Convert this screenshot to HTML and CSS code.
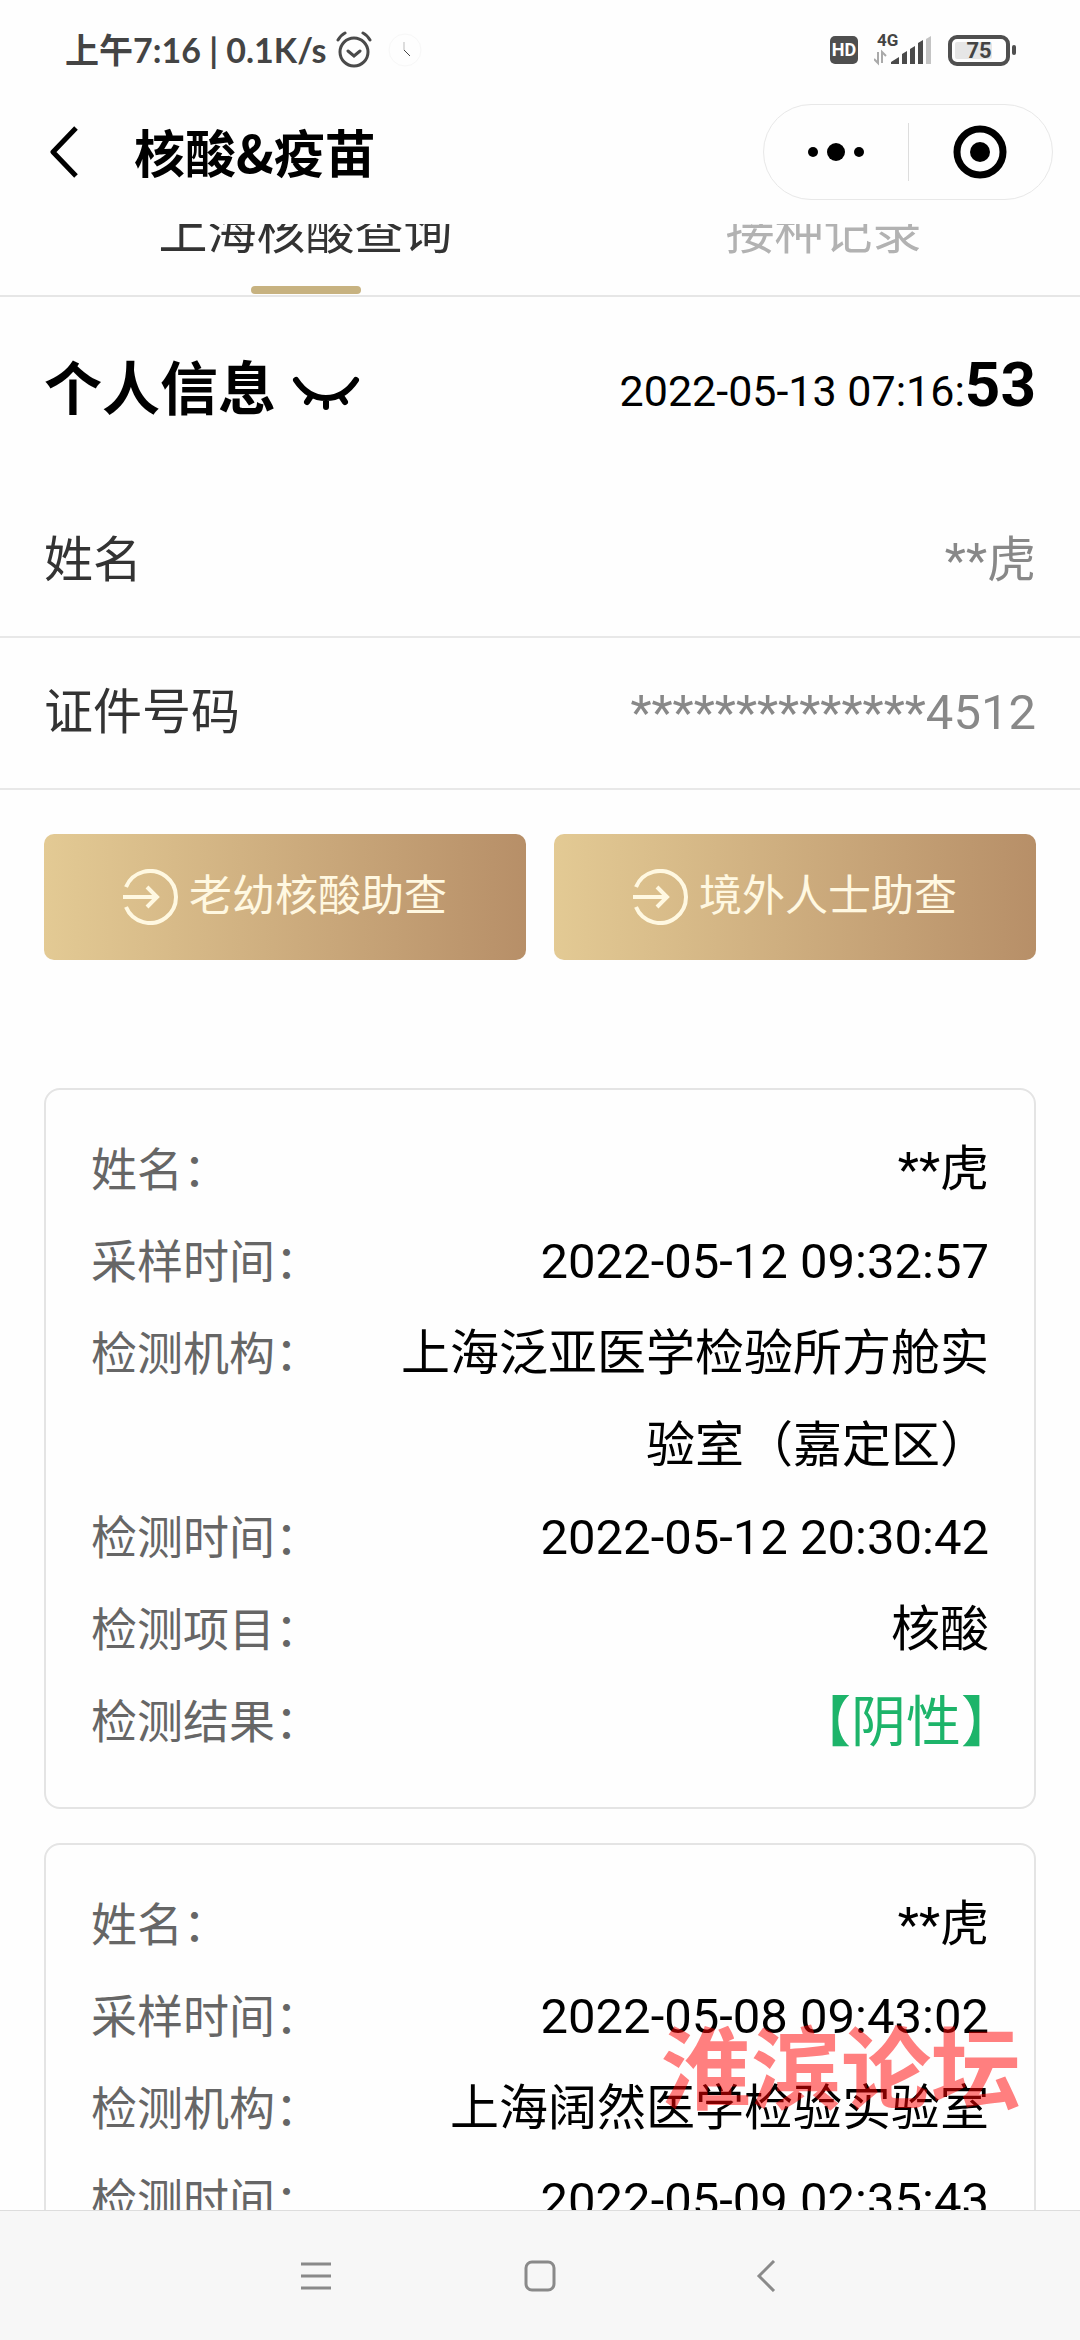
FILE: index.html
```html
<!DOCTYPE html>
<html lang="zh-CN">
<head>
    <meta charset="UTF-8">
    <meta name="viewport" content="width=device-width, initial-scale=1.0">
    <title>核酸&amp;疫苗</title>
    <link rel="stylesheet" href="styles.css">
</head>
<body>
    <!-- Status bar -->
    <div class="status-bar">
        <span class="status-text">上午7:16 | 0.1K/s</span>
        <svg class="alarm" width="36" height="38" viewBox="0 0 36 38" fill="none" stroke="#4a4a4a" stroke-width="3" stroke-linecap="round">
            <circle cx="18" cy="21" r="14"/>
            <path d="M12 20l6 5 6-5M2 9q3-5 7-7M34 9q-3-5-7-7"/>
        </svg>
        <svg class="clock" width="34" height="34" viewBox="0 0 34 34" fill="none">
            <circle cx="17" cy="17" r="16" stroke="#f7f7f7"/>
            <path d="M16 9v8" stroke="#bbb"/>
            <path d="M16 17l6 6" stroke="#444"/>
        </svg>
        <div class="status-icons">
            <span class="hd">HD</span>
            <svg width="58" height="34" viewBox="0 0 58 34">
                <text class="network" x="3" y="13">4G</text>
                <path d="M4 19v11l-4-4M8 30V19l4 4" fill="none" stroke="#aaa" stroke-width="2"/>
                <path d="M17 31v-2l8-5v7zM28 31V21l5-3v13zM36 31V16l5-3v18zM44 31V10l5-3v24z" fill="#4a4a4a"/>
                <path d="M52 31V6l5-3v28z" fill="#c4c4c4"/>
            </svg>
            <svg width="70" height="32" viewBox="0 0 70 32">
                <rect x="2" y="3" width="58" height="27" rx="7" fill="none" stroke="#4f4f4f" stroke-width="4"/>
                <rect x="7" y="8" width="37" height="17" rx="2" fill="#e6e6e6"/>
                <rect x="64" y="11" width="4" height="10" rx="2" fill="#4f4f4f"/>
                <text class="battery" x="31" y="24" text-anchor="middle">75</text>
            </svg>
        </div>
    </div>

    <!-- Title bar -->
    <header>
        <button class="back" type="button" aria-label="返回">
            <svg width="28" height="52" viewBox="0 0 28 52" fill="none" stroke="#000" stroke-width="5">
                <path d="M26 2L3 26l23 24" stroke-linejoin="round"/>
            </svg>
        </button>
        <h1>核酸&amp;疫苗</h1>
        <div class="capsule">
            <button type="button" aria-label="更多">
                <svg width="58" height="20" viewBox="0 0 58 20">
                    <circle cx="6" cy="10" r="5"/>
                    <circle cx="29" cy="10" r="9"/>
                    <circle cx="52" cy="10" r="5"/>
                </svg>
            </button>
            <button type="button" aria-label="关闭">
                <svg width="54" height="54" viewBox="0 0 54 54">
                    <circle cx="27" cy="27" r="23" fill="none" stroke="#000" stroke-width="7"/>
                    <circle cx="27" cy="27" r="10"/>
                </svg>
            </button>
        </div>
    </header>

    <main>
        <nav class="tabs">
            <a class="active" href="#test">上海核酸查询</a>
            <a href="#vaccine">接种记录</a>
        </nav>

        <!-- Personal info -->
        <section class="info">
            <div class="info-head">
                <h2>个人信息</h2>
                <button class="eye" type="button" aria-label="显示信息">
                    <svg width="68" height="36" viewBox="0 0 68 36" fill="none" stroke="#000" stroke-width="6" stroke-linecap="round">
                        <path d="M4 4c16 24 44 24 60 0M19 20l-4 6M34 22v9M49 20l4 6"/>
                    </svg>
                </button>
                <time>2022-05-13 07:16:<b>53</b></time>
            </div>
            <dl class="info-list">
                <div><dt>姓名</dt><dd>**虎</dd></div>
                <div><dt>证件号码</dt><dd>**************4512</dd></div>
            </dl>
        </section>

        <div class="actions">
            <button type="button">
                <svg width="56" height="56" viewBox="0 0 56 56" fill="none" stroke="#fff8e1" stroke-width="4">
                    <path d="M3 18a26 26 0 1 1 0 20M0 28h34M24 18l10 10-10 10"/>
                </svg>
                老幼核酸助查
            </button>
            <button type="button">
                <svg width="56" height="56" viewBox="0 0 56 56" fill="none" stroke="#fff8e1" stroke-width="4">
                    <path d="M3 18a26 26 0 1 1 0 20M0 28h34M24 18l10 10-10 10"/>
                </svg>
                境外人士助查
            </button>
        </div>

        <!-- Test records -->
        <section class="records">
            <dl class="card">
                <div><dt>姓名：</dt><dd>**虎</dd></div>
                <div><dt>采样时间：</dt><dd>2022-05-12 09:32:57</dd></div>
                <div><dt>检测机构：</dt><dd>上海泛亚医学检验所方舱实验室（嘉定区）</dd></div>
                <div><dt>检测时间：</dt><dd>2022-05-12 20:30:42</dd></div>
                <div><dt>检测项目：</dt><dd>核酸</dd></div>
                <div><dt>检测结果：</dt><dd class="negative">【阴性】</dd></div>
            </dl>
            <dl class="card">
                <div><dt>姓名：</dt><dd>**虎</dd></div>
                <div><dt>采样时间：</dt><dd>2022-05-08 09:43:02</dd></div>
                <div><dt>检测机构：</dt><dd>上海阔然医学检验实验室</dd></div>
                <div><dt>检测时间：</dt><dd>2022-05-09 02:35:43</dd></div>
            </dl>
        </section>

        <div class="watermark">淮滨论坛</div>
    </main>

    <!-- System navigation -->
    <footer>
        <button type="button" aria-label="最近任务">
            <svg width="32" height="32" viewBox="0 0 32 32" stroke="#8a8a8a" stroke-width="3">
                <path d="M1 4h30M1 16h30M1 28h30"/>
            </svg>
        </button>
        <button type="button" aria-label="主页">
            <svg width="32" height="32" viewBox="0 0 32 32" fill="none" stroke="#8a8a8a" stroke-width="3">
                <rect x="2" y="2" width="28" height="28" rx="6"/>
            </svg>
        </button>
        <button type="button" aria-label="返回">
            <svg width="32" height="32" viewBox="0 0 32 32" fill="none" stroke="#8a8a8a" stroke-width="3">
                <path d="M26 1L11 16l15 15"/>
            </svg>
        </button>
    </footer>
</body>
</html>
```

FILE: styles.css
```css
* {
    box-sizing: border-box;
    margin: 0;
    padding: 0;
}
body {
    display: flex;
    flex-direction: column;
    height: 100vh;
    background: #fefefe;
    color: #000;
    font-family: Roboto, "Noto Sans CJK SC", sans-serif;
    font-size: 49px;
    line-height: 1.2;
}
button {
    border: none;
    background: none;
    font: inherit;
    cursor: pointer;
}
svg {
    display: block;
}

/* Status bar */
.status-bar {
    display: flex;
    align-items: center;
    height: 100px;
    padding: 0 62px 0 65px;
    color: #444;
}
.status-text {
    font-family: Lato, "Noto Sans CJK SC", sans-serif;
    font-size: 34px;
    font-weight: bold;
}
.alarm {
    margin-left: 9px;
}
.clock {
    margin-left: 16px;
}
.status-icons {
    display: flex;
    align-items: center;
    gap: 16px;
    margin-left: auto;
}
.hd {
    width: 28px;
    border-radius: 5px;
    background: #4f4f4f;
    color: #fff;
    font-size: 18px;
    font-weight: bold;
    line-height: 28px;
    text-align: center;
}
.network {
    fill: #444;
    font-size: 17px;
    font-weight: bold;
}
.battery {
    fill: #444;
    font-size: 22px;
    font-weight: bold;
}

/* Title bar */
header {
    display: flex;
    align-items: center;
    height: 124px;
    padding: 0 27px 20px 50px;
}
h1 {
    margin-left: 56px;
    font-family: "Noto Sans CJK SC", sans-serif;
    font-size: 51px;
    font-weight: bold;
}
.capsule {
    display: flex;
    align-items: center;
    width: 290px;
    height: 96px;
    margin-left: auto;
    border: 1px solid #e8e8e8;
    border-radius: 48px;
}
.capsule button {
    display: flex;
    flex: 1;
    align-items: center;
    justify-content: center;
    height: 58px;
}
.capsule button + button {
    border-left: 1px solid #ddd;
}

main {
    position: relative;
    flex: 1;
    min-height: 0;
    overflow: hidden;
}

/* Tabs, partly scrolled under the title bar */
.tabs {
    display: flex;
    height: 105px;
    margin-top: -32px;
    padding: 0 22px;
    border-bottom: 2px solid #e6e6e6;
}
.tabs a {
    position: relative;
    flex: 1 1 auto;
    color: #b2b2b2;
    line-height: 82px;
    text-align: center;
    text-decoration: none;
}
.tabs .active {
    color: #333;
}
.tabs .active::after {
    content: "";
    position: absolute;
    bottom: 1px;
    left: 50%;
    width: 110px;
    height: 8px;
    margin-left: -55px;
    border-radius: 4px;
    background: #c7b280;
}

/* Personal info */
.info-head {
    display: flex;
    align-items: center;
    height: 189px;
    padding: 0 44px 12px;
}
h2 {
    font-family: "Noto Sans CJK SC", sans-serif;
    font-size: 58px;
    font-weight: bold;
}
.eye {
    margin-left: 16px;
    padding-top: 16px;
}
time {
    margin-left: auto;
    font-size: 43px;
}
time b {
    font-size: 62px;
}
.info-list div {
    display: flex;
    justify-content: space-between;
    padding: 0 44px;
    border-bottom: 2px solid #e8e8e8;
    line-height: 150px;
}
.info-list dt {
    color: #333;
}
.info-list dd {
    color: #888;
}

/* Action buttons */
.actions {
    display: flex;
    gap: 28px;
    padding: 44px 44px 128px;
}
.actions button {
    display: flex;
    flex: 1;
    align-items: center;
    justify-content: center;
    gap: 10px;
    height: 126px;
    border-radius: 10px;
    background: linear-gradient(90deg, #e3ca94, #b78f68);
    color: #fff8e1;
    font-size: 43px;
}

/* Test records */
.records {
    padding: 0 44px;
}
.card {
    margin-bottom: 34px;
    padding: 34px 45px 39px;
    border: 2px solid #e4e4e4;
    border-radius: 16px;
    line-height: 92px;
}
.card div {
    display: flex;
    justify-content: space-between;
}
.card dt {
    color: #666;
    font-size: 46px;
}
.card dd {
    width: 67%;
    text-align: right;
}
/* the closing bracket is half empty, let it hang */
.card .negative {
    margin-right: -27px;
    color: #1db46a;
    font-size: 55px;
}
.watermark {
    position: absolute;
    right: 59px;
    bottom: 102px;
    color: rgba(255, 0, 0, 0.5);
    font-family: STXingkai, KaiTi, "Noto Sans CJK SC", sans-serif;
    font-size: 90px;
    font-weight: bold;
    line-height: 90px;
}

/* System navigation */
footer {
    display: flex;
    align-items: center;
    justify-content: center;
    gap: 192px;
    height: 130px;
    border-top: 1px solid #ddd;
    background: #f7f7f7;
}
```
